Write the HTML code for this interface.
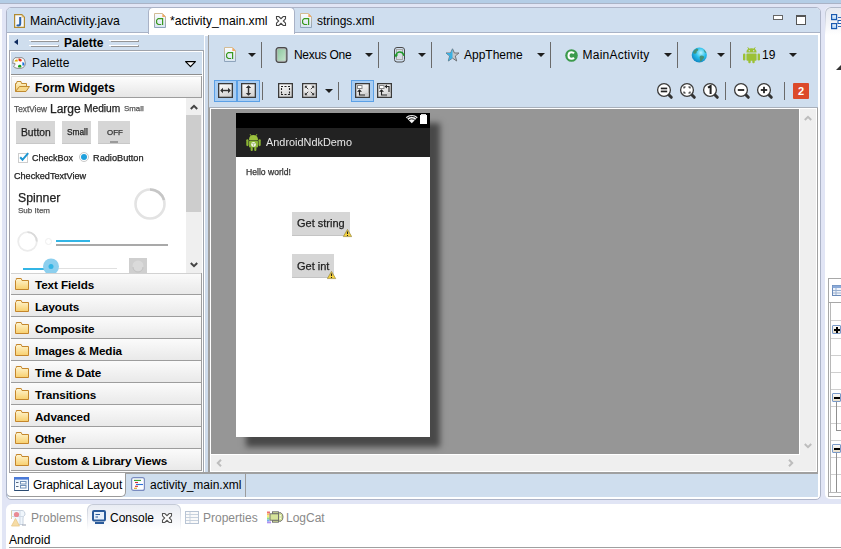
<!DOCTYPE html>
<html><head><meta charset="utf-8">
<style>
*{box-sizing:border-box;margin:0;padding:0}
html,body{width:841px;height:549px;overflow:hidden}
body{position:relative;background:#e1e5f5;font-family:"Liberation Sans",sans-serif;font-size:12px;color:#000}
.a{position:absolute}
.t{position:absolute;white-space:nowrap;line-height:14px}
.g{will-change:transform;-webkit-text-stroke:0.25px currentColor}
svg{position:absolute;overflow:visible}
.sep{position:absolute;width:1px;background:#6a6a6a}
.tri{position:absolute;width:0;height:0;border-left:4px solid transparent;border-right:4px solid transparent;border-top:4px solid #1e1e1e}
.cat{position:absolute;left:11px;width:191px;height:22px;background:linear-gradient(#fbfbfb,#e9e9e9);border-bottom:1px solid #9d9d9d}
.cat .t{left:24px;top:5px;font-weight:bold;font-size:11.7px;color:#000;letter-spacing:-0.1px}
.cat svg{left:4px;top:5px}
</style></head><body>
<svg width="0" height="0" style="position:absolute"><defs><linearGradient id="fc" x1="0" y1="0" x2="0" y2="1"><stop offset="0" stop-color="#fff6d2"/><stop offset="1" stop-color="#f8cf6c"/></linearGradient></defs></svg>

<!-- top strip -->
<div class="a" style="left:0;top:0;width:841px;height:3px;background:#b4cde6"></div>
<div class="a" style="left:0;top:3px;width:841px;height:1px;background:#aab3c6"></div>
<div class="a" style="left:0;top:9px;width:2px;height:540px;background:#fbfcfe"></div>

<!-- editor folder -->
<div class="a" style="left:6px;top:7px;width:815px;height:493px;border:1px solid #adb4c8;border-radius:5px;background:#fff"></div>
<!-- tab header -->
<div class="a" style="left:7px;top:8px;width:813px;height:24px;background:#cfdeef;border-radius:4px 4px 0 0"></div>
<div class="a" style="left:7px;top:32px;width:813px;height:1px;background:#a9b3c6"></div>
<!-- active tab -->
<div class="a" style="left:148px;top:7px;width:147px;height:27px;background:#fff;border:1px solid #a9b2c6;border-bottom:none;border-radius:5px 5px 0 0"></div>

<!-- tab icons/text -->
<svg style="left:14px;top:14px" width="12" height="14" viewBox="0 0 12 14"><path d="M0.6 0.6H7.8L10.4 3.2V13.4H0.6Z" fill="#f6f8fc" stroke="#b08a30" stroke-width="1.2"/><path d="M7.6 0.8L10.2 3.4H7.6Z" fill="#e8c070"/><path d="M6.2 3V9.6Q6.2 11.6 4.4 11.6Q3.4 11.6 3.1 10.6" fill="none" stroke="#2a62aa" stroke-width="2"/></svg>
<div class="t" style="left:30px;top:14px;font-size:12.2px">MainActivity.java</div>

<svg style="left:154px;top:13px" width="12" height="15" viewBox="0 0 12 15"><defs><linearGradient id="xs" x1="0" y1="0" x2="0" y2="1"><stop offset="0" stop-color="#d4bc94"/><stop offset="1" stop-color="#8ea4bc"/></linearGradient><linearGradient id="xf" x1="0" y1="0" x2="0" y2="1"><stop offset="0" stop-color="#fafcfe"/><stop offset="1" stop-color="#d8e4f0"/></linearGradient></defs><path d="M0.5 0.5H8.5L11.5 3.5V14.5H0.5Z" fill="url(#xf)" stroke="url(#xs)"/><path d="M8.3 0.5L11.5 3.7V4H8.3Z" fill="#f3a860"/><path d="M9 5.6H4.2L2.6 7.2V9.9L4.2 11.5H7.2M8.6 5V12" fill="none" stroke="#3a9a20" stroke-width="1.2"/></svg>
<div class="t" style="left:170px;top:14px;font-size:12.2px">*activity_main.xml</div>
<svg style="left:276px;top:16px" width="10" height="10" viewBox="0 0 10 10"><path d="M0.5 0.5H2.8L5 2.7L7.2 0.5H9.5V2.8L7.3 5L9.5 7.2V9.5H7.2L5 7.3L2.8 9.5H0.5V7.2L2.7 5L0.5 2.8Z" fill="#fff" stroke="#454545" stroke-width="1.1"/></svg>

<svg style="left:300px;top:13px" width="12" height="15" viewBox="0 0 12 15"><defs><linearGradient id="xs" x1="0" y1="0" x2="0" y2="1"><stop offset="0" stop-color="#d4bc94"/><stop offset="1" stop-color="#8ea4bc"/></linearGradient><linearGradient id="xf" x1="0" y1="0" x2="0" y2="1"><stop offset="0" stop-color="#fafcfe"/><stop offset="1" stop-color="#d8e4f0"/></linearGradient></defs><path d="M0.5 0.5H8.5L11.5 3.5V14.5H0.5Z" fill="url(#xf)" stroke="url(#xs)"/><path d="M8.3 0.5L11.5 3.7V4H8.3Z" fill="#f3a860"/><path d="M9 5.6H4.2L2.6 7.2V9.9L4.2 11.5H7.2M8.6 5V12" fill="none" stroke="#3a9a20" stroke-width="1.2"/></svg>
<div class="t" style="left:317px;top:14px">strings.xml</div>

<!-- min/max -->
<div class="a" style="left:773px;top:15px;width:10px;height:5px;border:1px solid #666;background:#fff"></div>
<div class="a" style="left:796px;top:15px;width:10px;height:10px;border:1px solid #555;border-top-width:2px;background:#fff"></div>

<!-- ============ PALETTE ============ -->
<div class="a" style="left:9px;top:35px;width:195px;height:15px;background:#cfdeee"></div>
<div class="a" style="left:9px;top:50px;width:195px;height:1px;background:#9fa3ab"></div>
<div class="a" style="left:14px;top:39px;width:0;height:0;border-top:3.5px solid transparent;border-bottom:3.5px solid transparent;border-right:4px solid #0d2a5e"></div>
<div class="a" style="left:29px;top:40px;width:29px;height:1px;background:#fff"></div><div class="a" style="left:31px;top:41px;width:28px;height:1px;background:#959595"></div><div class="a" style="left:58px;top:40px;width:1px;height:1px;background:#a8a8a8"></div>
<div class="a" style="left:29px;top:45px;width:29px;height:1px;background:#fff"></div><div class="a" style="left:31px;top:46px;width:28px;height:1px;background:#959595"></div><div class="a" style="left:58px;top:45px;width:1px;height:1px;background:#a8a8a8"></div>
<div class="t" style="left:64px;top:36px;font-weight:bold">Palette</div>
<div class="a" style="left:109px;top:40px;width:29px;height:1px;background:#fff"></div><div class="a" style="left:111px;top:41px;width:28px;height:1px;background:#959595"></div><div class="a" style="left:138px;top:40px;width:1px;height:1px;background:#a8a8a8"></div>
<div class="a" style="left:109px;top:45px;width:29px;height:1px;background:#fff"></div><div class="a" style="left:111px;top:46px;width:28px;height:1px;background:#959595"></div><div class="a" style="left:138px;top:45px;width:1px;height:1px;background:#a8a8a8"></div>

<!-- palette frame -->
<div class="a" style="left:9px;top:51px;width:1px;height:422px;background:#a0a0a8"></div>
<div class="a" style="left:9px;top:472px;width:194px;height:1px;background:#a0a0a8"></div>
<div class="a" style="left:202px;top:51px;width:1px;height:422px;background:#fff"></div>

<!-- dropdown row -->
<div class="a" style="left:11px;top:52px;width:191px;height:22px;background:#cfdeee"></div>
<div class="a" style="left:11px;top:74px;width:191px;height:1px;background:#8e8e8e"></div>
<svg style="left:12px;top:57px" width="14" height="12" viewBox="0 0 14 12"><path d="M3 0.7H10Q13.3 1.5 13.3 6Q13.3 10.5 9 11.3H5Q2 11 1.5 9Q3.5 8 3 6.5Q1.5 6 0.7 6.5Q0.5 2 3 0.7Z" fill="#fafafa" stroke="#8a8a8a" stroke-width="1"/><path d="M2.5 4.5Q3 2 5.5 2.5L5.8 4.5Z" fill="#e0b000"/><path d="M6.5 1.5Q8.5 1 10 3L9 4.5Q7 4.5 6.5 3.5Z" fill="#f03010"/><path d="M10.5 5Q12.5 5 12.5 7.5L11 9Q10 8 10.5 5Z" fill="#1a70e0"/><path d="M6 9Q7 7 9 8L9.5 10Q7.5 11 6 10Z" fill="#18a018"/></svg>
<div class="t" style="left:32px;top:56px">Palette</div>
<svg style="left:185px;top:61px" width="11" height="7" viewBox="0 0 11 7"><path d="M0.6 0.6H10.4L5.5 5.6Z" fill="#fff" stroke="#000" stroke-width="1.2" stroke-linejoin="round"/></svg>

<!-- form widgets header -->
<div class="a" style="left:11px;top:76px;width:191px;height:22px;background:linear-gradient(#fdfdfd,#e6e6e6);border-left:1px solid #e3e3e3;border-top:1px solid #e0e0e0;border-bottom:1px solid #9d9d9d"></div>
<svg style="left:15px;top:81px" width="16" height="12" viewBox="0 0 16 12"><defs><linearGradient id="fo" x1="0" y1="0" x2="0" y2="1"><stop offset="0" stop-color="#fff6d0"/><stop offset="1" stop-color="#f0c868"/></linearGradient></defs><path d="M0.5 10.5V2.5H1.5L2 0.5H6L6.5 2.5H11.5V5.5" fill="url(#fo)" stroke="#c08a30"/><path d="M0.5 10.5L4.5 5.5H14.5L11 10.5Z" fill="#f6d88a" stroke="#c08a30"/></svg>
<div class="t" style="left:35px;top:81px;font-weight:bold">Form Widgets</div>

<!-- widgets area (white) -->
<div class="a" style="left:11px;top:98px;width:191px;height:175px;background:#fff"></div>
<!-- scrollbar -->
<div class="a" style="left:186px;top:98px;width:16px;height:175px;background:#efefef"></div>
<div class="a" style="left:186px;top:115px;width:15px;height:97px;background:#cdcdcd"></div>
<svg style="left:190px;top:104px" width="8" height="6" viewBox="0 0 8 6"><path d="M0.8 5L4 1.8L7.2 5" fill="none" stroke="#444" stroke-width="2"/></svg>
<svg style="left:190px;top:262px" width="8" height="6" viewBox="0 0 8 6"><path d="M0.8 1L4 4.2L7.2 1" fill="none" stroke="#444" stroke-width="2"/></svg>

<div class="t g" style="left:14px;top:101.5px;font-size:8.3px;color:#555">TextView</div>
<div class="t g" style="left:50px;top:102px;font-size:12px;color:#222">Large</div>
<div class="t g" style="left:84px;top:102.2px;font-size:10.2px;color:#222">Medium</div>
<div class="t g" style="left:124px;top:101.7px;font-size:7.9px;color:#555">Small</div>

<div class="a" style="left:16px;top:121px;width:39px;height:23px;background:#d6d6d6;border-bottom:1px solid #c8c8c8"></div>
<div class="t g" style="left:20.5px;top:126.3px;font-size:10.3px;color:#222">Button</div>
<div class="a" style="left:62px;top:121px;width:29px;height:23px;background:#d6d6d6;border-bottom:1px solid #c8c8c8"></div>
<div class="t g" style="left:66.5px;top:125.3px;font-size:8.3px;color:#222">Small</div>
<div class="a" style="left:98px;top:121px;width:32px;height:23px;background:#d6d6d6;border-bottom:1px solid #c8c8c8"></div>
<div class="t g" style="left:106.5px;top:125.5px;font-size:7.9px;color:#333">OFF</div>
<div class="a" style="left:110px;top:141px;width:8px;height:2px;background:#9a9a9a"></div>

<svg style="left:18px;top:152px" width="11" height="11" viewBox="0 0 11 11"><rect x="0.5" y="1.5" width="9" height="9" fill="#fff" stroke="#cdcdcd"/><path d="M2.2 5.3L4.5 7.8L10.2 1.2" fill="none" stroke="#1e96d2" stroke-width="2"/></svg>
<div class="t g" style="left:31.5px;top:151.3px;font-size:9px;color:#222">CheckBox</div>
<svg style="left:79px;top:152px" width="10" height="10" viewBox="0 0 10 10"><circle cx="5" cy="5" r="4.5" fill="#fff" stroke="#c8c8c8"/><circle cx="5" cy="5" r="3" fill="#1fa0dc"/></svg>
<div class="t g" style="left:93px;top:151.3px;font-size:9.2px;color:#222">RadioButton</div>

<div class="t g" style="left:14px;top:168.6px;font-size:9.1px;color:#222">CheckedTextView</div>
<div class="t g" style="left:18px;top:190.6px;font-size:12.3px;color:#222">Spinner</div>
<div class="t g" style="left:18px;top:204.2px;font-size:8px;color:#555">Sub Item</div>
<svg style="left:133px;top:187px" width="34" height="34" viewBox="0 0 34 34"><circle cx="17" cy="17" r="14.5" fill="none" stroke="#e3e3e3" stroke-width="2.6"/><path d="M17 2.5A14.5 14.5 0 0 1 31 13" fill="none" stroke="#c6c6c6" stroke-width="2.6"/></svg>
<svg style="left:17px;top:231px" width="22" height="22" viewBox="0 0 22 22"><circle cx="10.5" cy="10.5" r="9.3" fill="none" stroke="#ececec" stroke-width="1.8"/><path d="M10.5 1.2A9.3 9.3 0 0 1 19.8 10.5" fill="none" stroke="#dadada" stroke-width="1.8"/></svg>
<svg style="left:44px;top:237px" width="9" height="9" viewBox="0 0 9 9"><circle cx="4.5" cy="4.5" r="3" fill="none" stroke="#eee" stroke-width="1"/></svg>
<div class="a" style="left:56px;top:240px;width:34px;height:2px;background:#33b5e5"></div>
<div class="a" style="left:56px;top:244px;width:112px;height:2px;background:#a9a9a9"></div>
<div class="a" style="left:23px;top:268px;width:28px;height:2px;background:#33b5e5"></div>
<div class="a" style="left:51px;top:268px;width:66px;height:1px;background:#e0e0e0"></div>
<svg style="left:42px;top:258px" width="18" height="16" viewBox="0 0 18 16"><circle cx="9" cy="8.5" r="8" fill="#8ccfee"/><circle cx="9" cy="8.5" r="2.5" fill="#33b5e5"/></svg>
<div class="a" style="left:129px;top:258px;width:18px;height:15px;background:#cfcfcf"></div>
<svg style="left:131px;top:259px" width="14" height="14" viewBox="0 0 14 14"><circle cx="7" cy="7" r="5.5" fill="#dadada"/><path d="M2 8A5 5 0 0 0 12 8" fill="none" stroke="#c2c2c2"/></svg>

<!-- categories -->

<div class="cat" style="top:273px"><svg width="15" height="12" viewBox="0 0 15 12"><path d="M0.5 11.5V2.5L1.3 1.5V0.5H6.2L7 2.5H13.5V11.5Z" fill="url(#fc)" stroke="#c4862c"/></svg><div class="t">Text Fields</div></div>
<div class="cat" style="top:295px"><svg width="15" height="12" viewBox="0 0 15 12"><path d="M0.5 11.5V2.5L1.3 1.5V0.5H6.2L7 2.5H13.5V11.5Z" fill="url(#fc)" stroke="#c4862c"/></svg><div class="t">Layouts</div></div>
<div class="cat" style="top:317px"><svg width="15" height="12" viewBox="0 0 15 12"><path d="M0.5 11.5V2.5L1.3 1.5V0.5H6.2L7 2.5H13.5V11.5Z" fill="url(#fc)" stroke="#c4862c"/></svg><div class="t">Composite</div></div>
<div class="cat" style="top:339px"><svg width="15" height="12" viewBox="0 0 15 12"><path d="M0.5 11.5V2.5L1.3 1.5V0.5H6.2L7 2.5H13.5V11.5Z" fill="url(#fc)" stroke="#c4862c"/></svg><div class="t">Images &amp; Media</div></div>
<div class="cat" style="top:361px"><svg width="15" height="12" viewBox="0 0 15 12"><path d="M0.5 11.5V2.5L1.3 1.5V0.5H6.2L7 2.5H13.5V11.5Z" fill="url(#fc)" stroke="#c4862c"/></svg><div class="t">Time &amp; Date</div></div>
<div class="cat" style="top:383px"><svg width="15" height="12" viewBox="0 0 15 12"><path d="M0.5 11.5V2.5L1.3 1.5V0.5H6.2L7 2.5H13.5V11.5Z" fill="url(#fc)" stroke="#c4862c"/></svg><div class="t">Transitions</div></div>
<div class="cat" style="top:405px"><svg width="15" height="12" viewBox="0 0 15 12"><path d="M0.5 11.5V2.5L1.3 1.5V0.5H6.2L7 2.5H13.5V11.5Z" fill="url(#fc)" stroke="#c4862c"/></svg><div class="t">Advanced</div></div>
<div class="cat" style="top:427px"><svg width="15" height="12" viewBox="0 0 15 12"><path d="M0.5 11.5V2.5L1.3 1.5V0.5H6.2L7 2.5H13.5V11.5Z" fill="url(#fc)" stroke="#c4862c"/></svg><div class="t">Other</div></div>
<div class="cat" style="top:449px"><svg width="15" height="12" viewBox="0 0 15 12"><path d="M0.5 11.5V2.5L1.3 1.5V0.5H6.2L7 2.5H13.5V11.5Z" fill="url(#fc)" stroke="#c4862c"/></svg><div class="t">Custom &amp; Library Views</div></div>


<div class="a" style="left:11px;top:273px;width:191px;height:1px;background:#d2d2d2"></div>
<!-- palette right edge lines / sash -->
<div class="a" style="left:201px;top:76px;width:1px;height:22px;background:#9d9d9d"></div><div class="a" style="left:201px;top:273px;width:1px;height:198px;background:#9d9d9d"></div>
<div class="a" style="left:203px;top:50px;width:1px;height:423px;background:#a0a5ad"></div>
<div class="a" style="left:205px;top:36px;width:3px;height:437px;background:#cfdcec"></div>
<div class="a" style="left:208px;top:35px;width:1px;height:438px;background:#a0a0a0"></div>

<!-- ============ CANVAS TOOLBAR ============ -->
<div class="a" style="left:209px;top:35px;width:609px;height:72px;background:#cfdeee"></div>
<div class="a" style="left:209px;top:107px;width:609px;height:1px;background:#a9b0ba"></div>

<svg style="left:224px;top:47px" width="12" height="15" viewBox="0 0 12 15"><defs><linearGradient id="xs" x1="0" y1="0" x2="0" y2="1"><stop offset="0" stop-color="#d4bc94"/><stop offset="1" stop-color="#8ea4bc"/></linearGradient><linearGradient id="xf" x1="0" y1="0" x2="0" y2="1"><stop offset="0" stop-color="#fafcfe"/><stop offset="1" stop-color="#d8e4f0"/></linearGradient></defs><path d="M0.5 0.5H8.5L11.5 3.5V14.5H0.5Z" fill="url(#xf)" stroke="url(#xs)"/><path d="M8.3 0.5L11.5 3.7V4H8.3Z" fill="#f3a860"/><path d="M9 5.6H4.2L2.6 7.2V9.9L4.2 11.5H7.2M8.6 5V12" fill="none" stroke="#3a9a20" stroke-width="1.2"/></svg>
<div class="tri" style="left:248px;top:53px"></div>
<div class="sep" style="left:261px;top:42px;height:26px"></div>
<svg style="left:275px;top:47px" width="13" height="16" viewBox="0 0 13 16"><defs><linearGradient id="ph" x1="0" y1="0" x2="1" y2="1"><stop offset="0" stop-color="#8ec8a0"/><stop offset="1" stop-color="#c4e4cc"/></linearGradient></defs><rect x="1.1" y="0.6" width="10.8" height="14.8" rx="2.6" fill="#b4b4b4" stroke="#4a4a4a" stroke-width="1.2"/><rect x="2.6" y="2.3" width="7.8" height="11.4" fill="url(#ph)"/></svg>
<div class="t" style="left:294px;top:48px;letter-spacing:-0.3px">Nexus One</div>
<div class="tri" style="left:365px;top:53px"></div>
<div class="sep" style="left:378px;top:42px;height:26px"></div>
<svg style="left:393px;top:46px" width="13" height="17" viewBox="0 0 13 17"><rect x="1.5" y="1.5" width="10" height="14.5" rx="2.5" fill="none" stroke="#4a4a4a" stroke-width="1"/><rect x="3.5" y="3.5" width="6" height="10" fill="#d8dde4" stroke="#a8a8a8"/><path d="M2.8 10Q3.5 6 6.8 6Q9.8 6 10.8 9" fill="none" stroke="#1e9a2a" stroke-width="1.3"/><path d="M0.8 8.5L3 11.5L5.2 8.5Z" fill="#1e9a2a"/><path d="M10.8 8.5V10" stroke="#1e9a2a" stroke-width="1.3"/></svg>
<div class="tri" style="left:418px;top:53px"></div>
<div class="sep" style="left:431px;top:42px;height:26px"></div>
<svg style="left:445px;top:48px" width="15" height="14" viewBox="0 0 15 14"><path d="M7.5 0.8L9.4 5H14L10.3 8L11.7 13L7.5 10.1L3.3 13L4.7 8L1 5H5.6Z" fill="#c2c6ca" stroke="#6e7378" stroke-width="1"/><path d="M7.5 0.8L5.6 5H1L4.7 8L3.3 13L7.5 10.1Z" fill="#3ab0e2"/></svg>
<div class="t" style="left:464px;top:48px">AppTheme</div>
<div class="tri" style="left:537px;top:53px"></div>
<div class="sep" style="left:550px;top:42px;height:26px"></div>
<svg style="left:565px;top:49px" width="13" height="13" viewBox="0 0 13 13"><circle cx="6.5" cy="6.5" r="6.3" fill="#3c9a4c"/><path d="M9 4.3Q8.2 3.2 6.6 3.2Q3.5 3.2 3.5 6.5Q3.5 9.8 6.6 9.8Q8.2 9.8 9 8.7" fill="none" stroke="#fff" stroke-width="2"/></svg>
<div class="t" style="left:582.5px;top:48px;letter-spacing:0.25px">MainActivity</div>
<div class="tri" style="left:664px;top:53px"></div>
<div class="sep" style="left:677px;top:42px;height:26px"></div>
<svg style="left:691px;top:47px" width="17" height="16" viewBox="0 0 17 16"><defs><radialGradient id="gl" cx="0.6" cy="0.35" r="0.75"><stop offset="0" stop-color="#b8f4ff"/><stop offset="0.45" stop-color="#28c0ec"/><stop offset="1" stop-color="#0a78b8"/></radialGradient></defs><circle cx="8.3" cy="8" r="7.6" fill="url(#gl)"/><path d="M2 6Q2.5 2.5 6 1.5Q8 2 7 3.5Q5 4 5.5 6Q4 7.5 2 6Z M9 9Q11 8 13 9.5Q13.5 11 12 12Q11 14.5 8.5 15Q9.5 13 9 12Q8 11 9 9Z M12.5 2.5Q14.5 3.5 15.3 6Q13.5 6 12.5 2.5Z" fill="#4a8c6a" opacity="0.9"/></svg>
<div class="tri" style="left:717px;top:53px"></div>
<div class="sep" style="left:730px;top:42px;height:26px"></div>
<svg style="left:743px;top:47px" width="17" height="17" viewBox="0 0 17 17"><path d="M4.8 0.3L5.9 2.3M12.2 0.3L11.1 2.3" stroke="#9cc136" stroke-width="1"/><path d="M3.4 5.5Q3.4 1.3 8.5 1.3Q13.6 1.3 13.6 5.5Z" fill="#9cc136"/><circle cx="6.3" cy="3.7" r="0.7" fill="#cfdeee"/><circle cx="10.7" cy="3.7" r="0.7" fill="#cfdeee"/><rect x="3.4" y="6.4" width="10.2" height="7.4" rx="1" fill="#9cc136"/><rect x="0" y="6.4" width="2.4" height="7" rx="1.2" fill="#9cc136"/><rect x="14.6" y="6.4" width="2.4" height="7" rx="1.2" fill="#9cc136"/><rect x="5.3" y="12" width="2.4" height="4.3" rx="1.1" fill="#9cc136"/><rect x="9.3" y="12" width="2.4" height="4.3" rx="1.1" fill="#9cc136"/></svg>
<div class="t" style="left:762px;top:48px">19</div>
<div class="tri" style="left:789px;top:53px"></div>

<!-- toolbar row 2 -->
<div class="a" style="left:214px;top:80px;width:23px;height:22px;background:#a9cdf2;border:1px solid #5ba0e6"></div>
<div class="a" style="left:237px;top:80px;width:23px;height:22px;background:#a9cdf2;border:1px solid #5ba0e6"></div>
<div class="a" style="left:351px;top:80px;width:23px;height:22px;background:#a9cdf2;border:1px solid #5ba0e6"></div>
<svg style="left:218px;top:83px" width="15" height="15" viewBox="0 0 15 15"><defs><linearGradient id="bg218" x1="0" y1="0" x2="0.4" y2="1"><stop offset="0" stop-color="#fff"/><stop offset="1" stop-color="#d4d4d4"/></linearGradient></defs><rect x="0.65" y="0.65" width="13.7" height="13.7" fill="url(#bg218)" stroke="#3a3a3a" stroke-width="1.3"/><path d="M3 7.5H12" stroke="#333" stroke-width="1.4"/><path d="M2.2 7.5L5 4.8V10.2Z M12.8 7.5L10 4.8V10.2Z" fill="#333"/></svg><svg style="left:241px;top:83px" width="15" height="15" viewBox="0 0 15 15"><defs><linearGradient id="bg241" x1="0" y1="0" x2="0.4" y2="1"><stop offset="0" stop-color="#fff"/><stop offset="1" stop-color="#d4d4d4"/></linearGradient></defs><rect x="0.65" y="0.65" width="13.7" height="13.7" fill="url(#bg241)" stroke="#3a3a3a" stroke-width="1.3"/><path d="M7.5 3V12" stroke="#333" stroke-width="1.4"/><path d="M7.5 2.2L4.8 5H10.2Z M7.5 12.8L4.8 10H10.2Z" fill="#333"/></svg><svg style="left:278px;top:83px" width="15" height="15" viewBox="0 0 15 15"><defs><linearGradient id="bg278" x1="0" y1="0" x2="0.4" y2="1"><stop offset="0" stop-color="#fff"/><stop offset="1" stop-color="#d4d4d4"/></linearGradient></defs><rect x="0.65" y="0.65" width="13.7" height="13.7" fill="url(#bg278)" stroke="#3a3a3a" stroke-width="1.3"/><path d="M3 3.5H5M6.5 3.5H8.5M10 3.5H12M3 11.5H5M6.5 11.5H8.5M10 11.5H12M3.5 5V7M3.5 8.5V10.5M11.5 5V7M11.5 8.5V10.5" stroke="#222" stroke-width="1.1"/></svg><svg style="left:302px;top:83px" width="15" height="15" viewBox="0 0 15 15"><defs><linearGradient id="bg302" x1="0" y1="0" x2="0.4" y2="1"><stop offset="0" stop-color="#fff"/><stop offset="1" stop-color="#d4d4d4"/></linearGradient></defs><rect x="0.65" y="0.65" width="13.7" height="13.7" fill="url(#bg302)" stroke="#3a3a3a" stroke-width="1.3"/><path d="M6.2 6.2L3.5 3.5M8.8 6.2L11.5 3.5M6.2 8.8L3.5 11.5M8.8 8.8L11.5 11.5" stroke="#333" stroke-width="0.9"/><path d="M2.8 2.8H5.6L2.8 5.6Z M12.2 2.8H9.4L12.2 5.6Z M2.8 12.2H5.6L2.8 9.4Z M12.2 12.2H9.4L12.2 9.4Z" fill="#333"/></svg><svg style="left:355px;top:83px" width="15" height="15" viewBox="0 0 15 15"><defs><linearGradient id="bg355" x1="0" y1="0" x2="0.4" y2="1"><stop offset="0" stop-color="#fff"/><stop offset="1" stop-color="#d4d4d4"/></linearGradient></defs><rect x="0.65" y="0.65" width="13.7" height="13.7" fill="url(#bg355)" stroke="#3a3a3a" stroke-width="1.3"/><rect x="2.5" y="2.5" width="4.5" height="3" fill="#fff" stroke="#888"/><path d="M4.5 7V12H10" fill="none" stroke="#222" stroke-width="1.1"/><path d="M2 8.8L4.5 6.2L7 8.8Z" fill="#222"/><rect x="10" y="10" width="3.5" height="3.5" fill="#ccc"/></svg><svg style="left:377px;top:83px" width="15" height="15" viewBox="0 0 15 15"><defs><linearGradient id="bg377" x1="0" y1="0" x2="0.4" y2="1"><stop offset="0" stop-color="#fff"/><stop offset="1" stop-color="#d4d4d4"/></linearGradient></defs><rect x="0.65" y="0.65" width="13.7" height="13.7" fill="url(#bg377)" stroke="#3a3a3a" stroke-width="1.3"/><rect x="2.5" y="2.5" width="4.5" height="3" fill="#fff" stroke="#888"/><path d="M4.5 7V12H10" fill="none" stroke="#222" stroke-width="1.1"/><path d="M2 8.8L4.5 6.2L7 8.8Z" fill="#222"/><path d="M12 9V3.5H8.5" fill="none" stroke="#222" stroke-width="1.1"/><path d="M10 1.5L7.5 3.5L10 5.5Z" fill="#222"/><rect x="10" y="10" width="3.5" height="3.5" fill="#ccc"/></svg><svg style="left:656px;top:82px" width="18" height="18" viewBox="0 0 18 18"><path d="M12 12L15.3 15.3" stroke="#333" stroke-width="3" stroke-linecap="round"/><circle cx="8" cy="8" r="6.4" fill="#fff" stroke="#3a3a3a" stroke-width="1.3"/><rect x="4.8" y="5.6" width="6.4" height="1.7" fill="#222"/><rect x="4.8" y="8.6" width="6.4" height="1.7" fill="#222"/></svg><svg style="left:679px;top:82px" width="18" height="18" viewBox="0 0 18 18"><path d="M12 12L15.3 15.3" stroke="#333" stroke-width="3" stroke-linecap="round"/><circle cx="8" cy="8" r="6.4" fill="#fff" stroke="#3a3a3a" stroke-width="1.3"/><path d="M5 6.6V5H6.6M9.4 5H11V6.6M11 9.4V11H9.4M6.6 11H5V9.4" fill="none" stroke="#222" stroke-width="1.1"/></svg><svg style="left:702px;top:82px" width="18" height="18" viewBox="0 0 18 18"><path d="M12 12L15.3 15.3" stroke="#333" stroke-width="3" stroke-linecap="round"/><circle cx="8" cy="8" r="6.4" fill="#fff" stroke="#3a3a3a" stroke-width="1.3"/><path d="M6 5.6L8.6 4V12" fill="none" stroke="#222" stroke-width="2"/></svg><svg style="left:733px;top:82px" width="18" height="18" viewBox="0 0 18 18"><path d="M12 12L15.3 15.3" stroke="#333" stroke-width="3" stroke-linecap="round"/><circle cx="8" cy="8" r="6.4" fill="#fff" stroke="#3a3a3a" stroke-width="1.3"/><rect x="4.8" y="7.1" width="6.4" height="1.8" fill="#222"/></svg><svg style="left:756px;top:82px" width="18" height="18" viewBox="0 0 18 18"><path d="M12 12L15.3 15.3" stroke="#333" stroke-width="3" stroke-linecap="round"/><circle cx="8" cy="8" r="6.4" fill="#fff" stroke="#3a3a3a" stroke-width="1.3"/><rect x="4.8" y="7.1" width="6.4" height="1.8" fill="#222"/><rect x="7.1" y="4.8" width="1.8" height="6.4" fill="#222"/></svg>
<div class="sep" style="left:262px;top:82px;height:18px"></div>
<div class="tri" style="left:325px;top:89px"></div>
<div class="sep" style="left:338px;top:82px;height:18px"></div>

<div class="sep" style="left:725px;top:82px;height:18px"></div>
<div class="sep" style="left:784px;top:82px;height:18px"></div>
<div class="a" style="left:793px;top:83px;width:16px;height:16px;background:#dc4a2a;border-radius:1px"></div>
<div class="t" style="left:793px;top:84px;width:16px;text-align:center;color:#fff;font-weight:bold;font-size:11px">2</div>

<!-- ============ CANVAS ============ -->
<div class="a" style="left:209px;top:108px;width:609px;height:365px;background:#fff;border:1px solid #a0a0a0;border-top:none"></div>
<div class="a" style="left:211px;top:109px;width:588px;height:345px;background:#969696;overflow:hidden">
  <div class="a" style="left:25px;top:4px;width:194px;height:324px;box-shadow:10px 10px 6px rgba(0,0,0,0.52)"></div>
</div>
<div class="a" style="left:800px;top:109px;width:16px;height:362px;background:#efefef"></div>
<div class="a" style="left:211px;top:455px;width:605px;height:16px;background:#efefef"></div>
<div class="a" style="left:9px;top:472px;width:809px;height:1px;background:#a0a0a0"></div>
<svg style="left:804px;top:115px" width="8" height="6" viewBox="0 0 8 6"><path d="M0.8 5L4 1.8L7.2 5" fill="none" stroke="#bdbdbd" stroke-width="2"/></svg>
<svg style="left:804px;top:443px" width="8" height="6" viewBox="0 0 8 6"><path d="M0.8 1L4 4.2L7.2 1" fill="none" stroke="#bdbdbd" stroke-width="2"/></svg>
<svg style="left:216px;top:459px" width="6" height="8" viewBox="0 0 6 8"><path d="M5 0.8L1.8 4L5 7.2" fill="none" stroke="#bdbdbd" stroke-width="2"/></svg>
<svg style="left:788px;top:459px" width="6" height="8" viewBox="0 0 6 8"><path d="M1 0.8L4.2 4L1 7.2" fill="none" stroke="#bdbdbd" stroke-width="2"/></svg>

<!-- phone -->
<div class="a" style="left:236px;top:113px;width:194px;height:324px;background:#fff"></div>
<div class="a" style="left:236px;top:113px;width:194px;height:15px;background:#000"></div>
<svg style="left:406px;top:114px" width="22" height="10" viewBox="0 0 22 10"><path d="M5.75 9.3L-0.2 3.3A8.6 8.6 0 0 1 11.7 3.3Z" fill="#f4f4f4"/><path d="M2.6 6.2A4.4 4.4 0 0 1 8.9 6.2M0.9 4.4A6.9 6.9 0 0 1 10.6 4.4" fill="none" stroke="#000" stroke-width="0.9"/><rect x="14" y="1" width="7" height="9" fill="#fff"/><rect x="15" y="0" width="5" height="1.2" fill="#ddd"/></svg>
<div class="a" style="left:236px;top:128px;width:194px;height:29px;background:#222"></div>
<svg style="left:246px;top:134px" width="15" height="18" viewBox="0 0 15 18"><path d="M3 6Q3 1 7.5 1Q12 1 12 6Z" fill="#9cc23e"/><path d="M4 0L5.2 2M11 0L9.8 2" stroke="#8ab030" stroke-width="0.9"/><rect x="3" y="6.6" width="9" height="7" rx="1" fill="#8cb636"/><rect x="0.3" y="5.2" width="2.2" height="7" rx="1.1" fill="#8cb636"/><rect x="12.5" y="5.2" width="2.2" height="7" rx="1.1" fill="#8cb636"/><rect x="4.6" y="13" width="2.2" height="4" rx="1" fill="#8cb636"/><rect x="8.2" y="13" width="2.2" height="4" rx="1" fill="#8cb636"/><circle cx="7.5" cy="10.5" r="2.4" fill="#f2f2ea"/><path d="M7.5 10V12.5M5.8 9.6H9.2" stroke="#9cb870" stroke-width="0.7"/></svg>
<div class="t g" style="left:265.5px;top:134.9px;color:#e8e8e8;font-size:10.9px;-webkit-text-stroke:0">AndroidNdkDemo</div>
<div class="t g" style="left:245.5px;top:164.7px;color:#333;font-size:8.6px">Hello world!</div>
<div class="a" style="left:292px;top:212px;width:58px;height:24px;background:#d6d6d6;border-bottom:1px solid #c4c4c4"></div>
<div class="t g" style="left:297px;top:216.4px;color:#222;font-size:11px">Get string</div>
<div class="a" style="left:292px;top:254px;width:42px;height:24px;background:#d6d6d6;border-bottom:1px solid #c4c4c4"></div>
<div class="t g" style="left:297px;top:259.1px;color:#222;font-size:11px">Get int</div>
<svg style="left:343px;top:229px" width="9" height="8" viewBox="0 0 9 8"><path d="M4.5 0.4L8.7 7.6H0.3Z" fill="#f6d23e" stroke="#8a7a30" stroke-width="0.6" stroke-linejoin="round"/><path d="M4.5 2.4V5M4.5 5.9V6.9" stroke="#222" stroke-width="1.1"/></svg>
<svg style="left:327px;top:271px" width="9" height="8" viewBox="0 0 9 8"><path d="M4.5 0.4L8.7 7.6H0.3Z" fill="#f6d23e" stroke="#8a7a30" stroke-width="0.6" stroke-linejoin="round"/><path d="M4.5 2.4V5M4.5 5.9V6.9" stroke="#222" stroke-width="1.1"/></svg>

<!-- ============ BOTTOM EDITOR TABS ============ -->
<div class="a" style="left:7px;top:473px;width:811px;height:24px;background:#cfdeee"></div>
<div class="a" style="left:6px;top:473px;width:120px;height:24px;background:#fff;border:1px solid #9a9a9a;border-top:none;border-left-color:#a9b2c6;border-radius:0 0 5px 5px"></div>
<svg style="left:14px;top:477px" width="15" height="14" viewBox="0 0 15 14"><defs><linearGradient id="gw" x1="0" y1="0" x2="0" y2="1"><stop offset="0" stop-color="#e4f0fc"/><stop offset="1" stop-color="#fff"/></linearGradient></defs><rect x="0.5" y="0.5" width="14" height="13" fill="url(#gw)" stroke="#5a7aa8"/><path d="M0.5 13.5H14.5" stroke="#2a4a70"/><rect x="0" y="0" width="15" height="2.6" fill="#4a7ad8"/><path d="M2 5.5H4.5M2 9.5H4.5" stroke="#5a6a80" stroke-width="1.2"/><rect x="6.5" y="4.5" width="5.5" height="2.5" fill="#fff" stroke="#7090b8"/><rect x="6.5" y="8.5" width="5.5" height="2.5" fill="#fff" stroke="#7090b8"/></svg>
<div class="t" style="left:33px;top:478px;letter-spacing:-0.1px">Graphical Layout</div>
<svg style="left:131px;top:477px" width="14" height="14" viewBox="0 0 14 14"><rect x="0.6" y="0.6" width="12.8" height="12.8" rx="2" fill="#fbfcfe" stroke="#7a8cc0" stroke-width="1.2"/><path d="M3 3.4H10" stroke="#30a030" stroke-width="1.1"/><path d="M4 5.5H7" stroke="#d03030" stroke-width="1.1"/><path d="M5 7.5H12" stroke="#2a70d8" stroke-width="1.1"/><path d="M4 9.3H7" stroke="#d03030" stroke-width="1.1"/><path d="M3 11.3H6" stroke="#e0a020" stroke-width="1.1"/></svg>
<div class="t" style="left:150px;top:478px">activity_main.xml</div>
<div class="a" style="left:125px;top:473px;width:693px;height:1px;background:#a0a0a0"></div>
<div class="a" style="left:245px;top:473px;width:1px;height:24px;background:#9c9c9c"></div>

<!-- ============ RIGHT PANEL ============ -->
<div class="a" style="left:825px;top:7px;width:30px;height:492px;background:#fff;border-radius:5px"></div><div class="a" style="left:825px;top:7px;width:30px;height:28px;background:linear-gradient(#b0b8c8,#d8dce6 50%,#fff);border-radius:6px 0 0 0"></div><div class="a" style="left:826px;top:8px;width:30px;height:27px;background:linear-gradient(#e6e9f0,#f4f5f8 60%,#fff);border-radius:5px 0 0 0"></div>
<svg style="left:831px;top:14px" width="12" height="16" viewBox="0 0 12 16"><defs><linearGradient id="sq" x1="0" y1="0" x2="0" y2="1"><stop offset="0" stop-color="#fff"/><stop offset="1" stop-color="#9cc8f4"/></linearGradient></defs><rect x="0.6" y="0.6" width="5" height="5" fill="url(#sq)" stroke="#1a5ab0" stroke-width="1.2"/><rect x="0.6" y="9.6" width="5" height="5" fill="url(#sq)" stroke="#1a5ab0" stroke-width="1.2"/><path d="M7 3.5H11M7 12.5H11" stroke="#3a6ab8" stroke-width="1.1"/><rect x="7" y="6.5" width="4" height="3" fill="#fff" stroke="#1a5ab0" stroke-width="1"/></svg>
<div class="a" style="left:836px;top:65px;width:0;height:0;border-left:5px solid transparent;border-right:5px solid transparent;border-bottom:5px solid #333"></div>
<div class="a" style="left:828px;top:278px;width:20px;height:219px;border:1px solid #a8a8a8;border-right:none"></div>
<svg style="left:832px;top:285px" width="12" height="11" viewBox="0 0 12 11"><rect x="0.5" y="0.5" width="11" height="10" fill="#f0f4fa" stroke="#6a8ab8"/><rect x="0.5" y="0.5" width="11" height="2.5" fill="#8aaad8"/><path d="M1 5.5H11M1 8H11M4 3V10" stroke="#9ab0d0"/></svg>
<div class="a" style="left:829px;top:302px;width:12px;height:1px;background:#a8a8a8"></div>
<div class="a" style="left:830px;top:303px;width:1px;height:190px;background:#b8b8b8"></div>
<div class="a" style="left:829px;top:492px;width:12px;height:1px;background:#b8b8b8"></div>
<div class="a" style="left:831px;top:320px;width:10px;height:1px;background:#cfcfcf"></div>
<div class="a" style="left:831px;top:338px;width:10px;height:1px;background:#cfcfcf"></div>
<div class="a" style="left:831px;top:355px;width:10px;height:1px;background:#cfcfcf"></div>
<div class="a" style="left:831px;top:372px;width:10px;height:1px;background:#cfcfcf"></div>
<div class="a" style="left:831px;top:389px;width:10px;height:1px;background:#cfcfcf"></div>
<div class="a" style="left:831px;top:406px;width:10px;height:1px;background:#cfcfcf"></div>
<div class="a" style="left:831px;top:423px;width:10px;height:1px;background:#cfcfcf"></div>
<div class="a" style="left:831px;top:440px;width:10px;height:1px;background:#cfcfcf"></div>
<div class="a" style="left:831px;top:457px;width:10px;height:1px;background:#cfcfcf"></div>
<div class="a" style="left:831px;top:474px;width:10px;height:1px;background:#cfcfcf"></div>
<div class="a" style="left:832px;top:325px;width:9px;height:9px;background:linear-gradient(#fafafa,#e6dcc8);border:1px solid #7a9ac8;border-radius:1px"></div>
<div class="a" style="left:834px;top:329px;width:6px;height:2px;background:#000"></div>
<div class="a" style="left:836px;top:327px;width:2px;height:6px;background:#000"></div>
<div class="a" style="left:836px;top:402px;width:1px;height:29px;background:#909090"></div>
<div class="a" style="left:836px;top:430px;width:5px;height:1px;background:#909090"></div>
<div class="a" style="left:832px;top:393px;width:9px;height:9px;background:linear-gradient(#fafafa,#e6dcc8);border:1px solid #7a9ac8;border-radius:1px"></div>
<div class="a" style="left:834px;top:397px;width:6px;height:2px;background:#000"></div>
<div class="a" style="left:832px;top:444px;width:9px;height:9px;background:linear-gradient(#fafafa,#e6dcc8);border:1px solid #7a9ac8;border-radius:1px"></div>
<div class="a" style="left:834px;top:448px;width:6px;height:2px;background:#000"></div>
<div class="a" style="left:836px;top:453px;width:1px;height:39px;background:#909090"></div>

<!-- ============ CONSOLE PANEL ============ -->
<div class="a" style="left:6px;top:504px;width:840px;height:50px;background:#fff;border-radius:6px 0 0 0"></div>
<div class="a" style="left:87px;top:504px;width:94px;height:26px;background:linear-gradient(#c3c9d6,#e6e9ef 60%,#fff);border-radius:6px 6px 0 0"></div><div class="a" style="left:88px;top:505px;width:92px;height:25px;background:linear-gradient(#e9ecf3,#f6f7fa 60%,#fff);border-radius:5px 5px 0 0"></div>
<svg style="left:10px;top:509px" width="17" height="18" viewBox="0 0 17 18"><path d="M1.5 1.5H12Q15 1.5 15 6Q13 7 13 9V15.5H5" fill="#f0f6fc" stroke="#c8d2de"/><path d="M1.5 1.5V10" stroke="#d8d0a8"/><path d="M1.5 7.5H13M10 1.5V15" stroke="#d0dae6"/><circle cx="6.5" cy="5.5" r="2.6" fill="#e98a94"/><path d="M5.5 9.5L9.5 17H1.5Z" fill="#f6dca6" stroke="#e8c888" stroke-width="0.8"/><path d="M12 16H16" stroke="#a8b0bc" stroke-width="1.2"/></svg>
<div class="t" style="left:31px;top:511px;color:#8a8a8a">Problems</div>
<svg style="left:92px;top:510px" width="15" height="15" viewBox="0 0 15 15"><rect x="1" y="1" width="12" height="9.5" rx="1" fill="#e8f0fa" stroke="#2a5a9a" stroke-width="2"/><path d="M3.5 4.5H8M3.5 7H6" stroke="#2a5a9a"/><rect x="3" y="12" width="9" height="2" fill="#2a5a9a"/></svg>
<div class="t" style="left:110px;top:511px">Console</div>
<svg style="left:162px;top:513px" width="10" height="10" viewBox="0 0 10 10"><path d="M0.5 0.5H2.8L5 2.7L7.2 0.5H9.5V2.8L7.3 5L9.5 7.2V9.5H7.2L5 7.3L2.8 9.5H0.5V7.2L2.7 5L0.5 2.8Z" fill="#fff" stroke="#555" stroke-width="1.1"/></svg>
<svg style="left:185px;top:511px" width="14" height="13" viewBox="0 0 14 13"><rect x="0.5" y="0.5" width="13" height="12" fill="#fafafa" stroke="#b8c4d4"/><path d="M1 3.5H13M1 6.5H13M1 9.5H13M5 1V12" stroke="#c8d2de"/></svg>
<div class="t" style="left:203px;top:511px;color:#8a8a8a">Properties</div>
<svg style="left:266px;top:511px" width="18" height="13" viewBox="0 0 18 13"><rect x="1" y="0.5" width="3" height="2" fill="#f07070"/><rect x="1" y="2.5" width="2.5" height="2" fill="#f8c060"/><rect x="1" y="4.5" width="2.5" height="2" fill="#f8f070"/><rect x="1" y="6.5" width="2.5" height="2" fill="#90e080"/><rect x="1" y="8.5" width="2.5" height="2" fill="#70b0f0"/><rect x="1" y="10.5" width="4" height="1.8" fill="#b090f0"/><rect x="6.5" y="0.8" width="6" height="2" fill="#d6e49a" stroke="#6a6a6a" stroke-width="0.9"/><rect x="6.5" y="9.2" width="6" height="2" fill="#d6e49a" stroke="#6a6a6a" stroke-width="0.9"/><rect x="4" y="2.8" width="8.5" height="6.4" fill="#d6e49a" stroke="#6a6a6a" stroke-width="0.9"/><path d="M12.5 1.8H15Q17 3 17 6Q17 9 15 10.2H12.5Z" fill="#d6e49a" stroke="#6a6a6a" stroke-width="0.9"/><circle cx="14.3" cy="4.7" r="0.7" fill="#fff"/><circle cx="14.3" cy="7.3" r="0.7" fill="#fff"/></svg>
<div class="t" style="left:286px;top:511px;color:#8a8a8a">LogCat</div>
<div class="t" style="left:9px;top:533px">Android</div>
<div class="a" style="left:9px;top:547px;width:832px;height:1px;background:#a0a0a0"></div>

</body></html>
